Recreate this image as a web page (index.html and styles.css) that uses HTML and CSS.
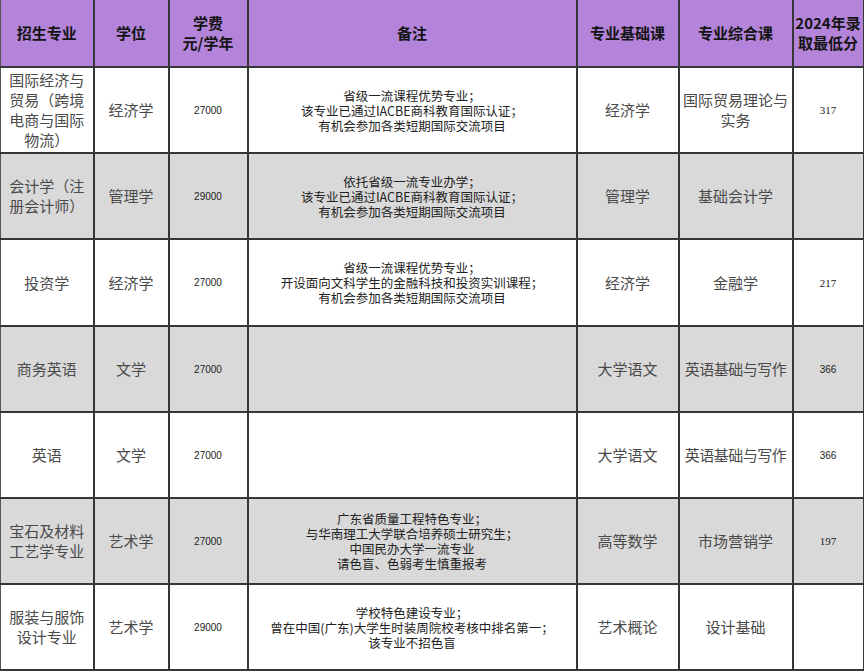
FILE: index.html
```html
<!DOCTYPE html>
<html lang="zh">
<head>
<meta charset="utf-8">
<link rel="stylesheet" href="styles.css">
</head>
<body>
<table class="grid">
  <colgroup>
    <col class="c1"><col class="c2"><col class="c3"><col class="c4"><col class="c5"><col class="c6"><col class="c7">
  </colgroup>
  <thead>
    <tr class="head">
      <th>招生专业</th>
      <th>学位</th>
      <th>学费<br>元/学年</th>
      <th>备注</th>
      <th>专业基础课</th>
      <th>专业综合课</th>
      <th class="score-h">2024年录<br>取最低分</th>
    </tr>
  </thead>
  <tbody>
    <tr class="r1">
      <td class="major">国际经济与<br>贸易（跨境<br>电商与国际<br>物流）</td>
      <td class="deg">经济学</td>
      <td class="fee">27000</td>
      <td class="note"><div>省级一流课程优势专业；</div><div>该专业已通过IACBE商科教育国际认证；</div><div>有机会参加各类短期国际交流项目</div></td>
      <td class="deg">经济学</td>
      <td class="deg">国际贸易理论与<br>实务</td>
      <td class="score">317</td>
    </tr>
    <tr class="r2 alt">
      <td class="major">会计学（注<br>册会计师）</td>
      <td class="deg">管理学</td>
      <td class="fee">29000</td>
      <td class="note"><div>依托省级一流专业办学；</div><div>该专业已通过IACBE商科教育国际认证；</div><div>有机会参加各类短期国际交流项目</div></td>
      <td class="deg">管理学</td>
      <td class="deg">基础会计学</td>
      <td class="score"></td>
    </tr>
    <tr class="r3">
      <td class="major">投资学</td>
      <td class="deg">经济学</td>
      <td class="fee">27000</td>
      <td class="note"><div>省级一流课程优势专业；</div><div>开设面向文科学生的金融科技和投资实训课程；</div><div>有机会参加各类短期国际交流项目</div></td>
      <td class="deg">经济学</td>
      <td class="deg">金融学</td>
      <td class="score">217</td>
    </tr>
    <tr class="r4 alt">
      <td class="major">商务英语</td>
      <td class="deg">文学</td>
      <td class="fee">27000</td>
      <td class="note"></td>
      <td class="deg">大学语文</td>
      <td class="deg tight">英语基础与写作</td>
      <td class="score sans">366</td>
    </tr>
    <tr class="r5">
      <td class="major">英语</td>
      <td class="deg">文学</td>
      <td class="fee">27000</td>
      <td class="note"></td>
      <td class="deg">大学语文</td>
      <td class="deg tight">英语基础与写作</td>
      <td class="score sans">366</td>
    </tr>
    <tr class="r6 alt">
      <td class="major">宝石及材料<br>工艺学专业</td>
      <td class="deg">艺术学</td>
      <td class="fee">27000</td>
      <td class="note"><div>广东省质量工程特色专业；</div><div>与华南理工大学联合培养硕士研究生；</div><div>中国民办大学一流专业</div><div>请色盲、色弱考生慎重报考</div></td>
      <td class="deg">高等数学</td>
      <td class="deg">市场营销学</td>
      <td class="score">197</td>
    </tr>
    <tr class="r7">
      <td class="major">服装与服饰<br>设计专业</td>
      <td class="deg">艺术学</td>
      <td class="fee">29000</td>
      <td class="note"><div>学校特色建设专业；</div><div>曾在中国(广东)大学生时装周院校考核中排名第一；</div><div>该专业不招色盲</div></td>
      <td class="deg">艺术概论</td>
      <td class="deg">设计基础</td>
      <td class="score"></td>
    </tr>
  </tbody>
</table>
</body>
</html>
```

FILE: styles.css
```css
html, body {
  margin: 0;
  padding: 0;
  background: #ffffff;
}

body {
  width: 864px;
  height: 672px;
  overflow: hidden;
  font-family: "Noto Sans CJK SC", "Noto Sans", sans-serif;
  color: #3a3a3a;
}

.grid {
  border-collapse: collapse;
  table-layout: fixed;
  width: 863px;
}

.c1 { width: 93px; }
.c2 { width: 75px; }
.c3 { width: 79px; }
.c4 { width: 329px; }
.c5 { width: 102px; }
.c6 { width: 114px; }
.c7 { width: 71px; }

.grid th,
.grid td {
  border: 2px solid #363636;
  text-align: center;
  vertical-align: middle;
  padding: 0;
}

.grid thead th {
  border-top: none;
  background: #b384d9;
  color: #141414;
  font-weight: 700;
  font-size: 15px;
  line-height: 20px;
  height: 66px;
}

.grid thead th:first-child,
.grid td:first-child {
  border-left: 1px solid #555;
}

.grid tbody tr {
  height: 86px;
}

.grid tbody tr.r3 {
  height: 87px;
}

.alt td {
  background: #d9d9d9;
}

.major {
  font-size: 15px;
  line-height: 20px;
  color: #4a4a4a;
  padding: 0 2px;
}

.deg {
  font-size: 15px;
  line-height: 20px;
  color: #4a4a4a;
}

.deg.tight {
  letter-spacing: -0.5px;
}

.fee {
  font-family: "Liberation Sans", Arial, sans-serif;
  font-size: 10px;
  color: #222;
}

.note {
  font-size: 12.5px;
  line-height: 15px;
  color: #222;
}

.note div {
  height: 15px;
  line-height: 15px;
}

.score {
  font-family: "Liberation Serif", serif;
  font-size: 11px;
  color: #222;
}

.score.sans {
  font-family: "Liberation Sans", Arial, sans-serif;
  font-size: 10px;
}
```
